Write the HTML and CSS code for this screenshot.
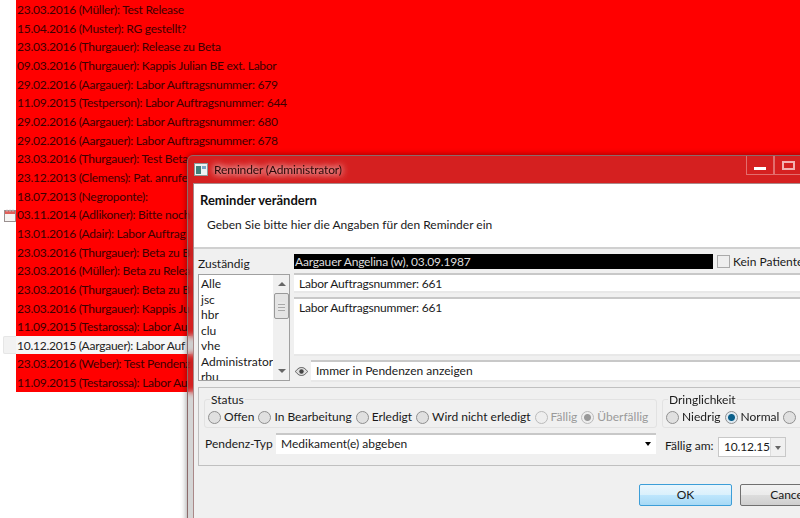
FILE: index.html
```html
<!DOCTYPE html>
<html>
<head>
  <meta charset="utf-8">
  <title>Reminder</title>
  <link rel="stylesheet" href="styles.css">
</head>
<body>

<div class="rows">
  <div class="row"><span class="gutter"></span><span class="txt">23.03.2016 (Müller): Test Release</span></div>
  <div class="row"><span class="gutter"></span><span class="txt">15.04.2016 (Muster): RG gestellt?</span></div>
  <div class="row"><span class="gutter"></span><span class="txt">23.03.2016 (Thurgauer): Release zu Beta</span></div>
  <div class="row"><span class="gutter"></span><span class="txt">09.03.2016 (Thurgauer): Kappis Julian BE ext. Labor</span></div>
  <div class="row"><span class="gutter"></span><span class="txt">29.02.2016 (Aargauer): Labor Auftragsnummer: 679</span></div>
  <div class="row"><span class="gutter"></span><span class="txt">11.09.2015 (Testperson): Labor Auftragsnummer: 644</span></div>
  <div class="row"><span class="gutter"></span><span class="txt">29.02.2016 (Aargauer): Labor Auftragsnummer: 680</span></div>
  <div class="row"><span class="gutter"></span><span class="txt">29.02.2016 (Aargauer): Labor Auftragsnummer: 678</span></div>
  <div class="row"><span class="gutter"></span><span class="txt">23.03.2016 (Thurgauer): Test Beta</span></div>
  <div class="row"><span class="gutter"></span><span class="txt">23.12.2013 (Clemens): Pat. anrufe</span></div>
  <div class="row"><span class="gutter"></span><span class="txt">18.07.2013 (Negroponte):</span></div>
  <div class="row"><span class="gutter">
    <svg class="cal" width="12" height="13" viewBox="0 0 12 13"><rect x=".5" y="1.500" width="11" height="11" fill="#f6f4f2" stroke="#9a9090"/><rect x="1" y="2" width="10" height="3" fill="#e0605a"/><path d="M3 .5V3M6 .5V3M9 .5V3" stroke="#c9b8b8"/></svg>
  </span><span class="txt">03.11.2014 (Adlikoner): Bitte noch</span></div>
  <div class="row"><span class="gutter"></span><span class="txt">13.01.2016 (Adair): Labor Auftrag</span></div>
  <div class="row"><span class="gutter"></span><span class="txt">23.03.2016 (Thurgauer): Beta zu B</span></div>
  <div class="row"><span class="gutter"></span><span class="txt">23.03.2016 (Müller): Beta zu Relea</span></div>
  <div class="row"><span class="gutter"></span><span class="txt">23.03.2016 (Thurgauer): Beta zu B</span></div>
  <div class="row"><span class="gutter"></span><span class="txt">23.03.2016 (Thurgauer): Kappis Ju</span></div>
  <div class="row"><span class="gutter"></span><span class="txt">11.09.2015 (Testarossa): Labor Au</span></div>
  <div class="row sel"><span class="gutter"></span><span class="txt">10.12.2015 (Aargauer): Labor Auf</span></div>
  <div class="row"><span class="gutter"></span><span class="txt">23.03.2016 (Weber): Test Pendenz</span></div>
  <div class="row"><span class="gutter"></span><span class="txt">11.09.2015 (Testarossa): Labor Au</span></div>
</div>

<div class="win">
  <div class="titlebar">
    <svg class="winicon" width="14" height="13" viewBox="0 0 14 13"><rect x=".5" y=".5" width="13" height="12" fill="#eef2f2" stroke="#8a9a9a"/><rect x="2" y="3" width="5" height="8" fill="#3f7f7a"/><rect x="8" y="3" width="4" height="3" fill="#7aa6c8"/></svg>
    <span class="wintitle">Reminder (Administrator)</span>
    <span class="winbtns">
      <span class="winbtn"><i class="min"></i></span>
      <span class="winbtn"><i class="max"></i></span>
    </span>
  </div>
  <div class="client">
    <div class="head">
      <div class="head-title">Reminder verändern</div>
      <div class="head-sub">Geben Sie bitte hier die Angaben für den Reminder ein</div>
    </div>
    <div class="form">
      <div class="top">
        <div class="left">
          <div class="lbl-z">Zuständig</div>
          <div class="listbox">
            <div class="items">
              <div>Alle</div><div>jsc</div><div>hbr</div><div>clu</div><div>vhe</div><div>Administrator</div><div>rbu</div>
            </div>
            <div class="sbar">
              <span class="arr up"></span>
              <span class="thumb"></span>
              <span class="arr down"></span>
            </div>
          </div>
        </div>
        <div class="right">
          <div class="patline">
            <div class="pat">Aargauer Angelina (w), 03.09.1987</div>
            <span class="cb"></span>
            <span class="nopat">Kein Patiente</span>
          </div>
          <div class="field f1">Labor Auftragsnummer: 661</div>
          <div class="field f2">Labor Auftragsnummer: 661</div>
          <div class="eyeline">
            <svg class="eye" width="13" height="9" viewBox="0 0 13 9"><path d="M.5 4.5C3 1 5 .5 6.500 .5S10 1 12.500 4.500C10 8 8 8.500 6.500 8.500S3 8 .5 4.500Z" fill="#ddd" stroke="#555"/><circle cx="6.500" cy="4.500" r="2.200" fill="#444"/></svg>
            <div class="field f3">Immer in Pendenzen anzeigen</div>
          </div>
        </div>
      </div>

      <div class="panel">
        <div class="groups">
          <div class="grp status">
            <span class="legend">Status</span>
            <label class="radio"><i></i>Offen</label>
            <label class="radio"><i></i>In Bearbeitung</label>
            <label class="radio"><i></i>Erledigt</label>
            <label class="radio"><i></i>Wird nicht erledigt</label>
            <label class="radio off"><i></i>Fällig</label>
            <label class="radio off on"><i></i>Überfällig</label>
          </div>
          <div class="grp dring">
            <span class="legend">Dringlichkeit</span>
            <label class="radio"><i></i>Niedrig</label>
            <label class="radio sel-r"><i></i>Normal</label>
            <label class="radio"><i></i></label>
          </div>
        </div>
        <div class="typline">
          <span class="typlbl">Pendenz-Typ</span>
          <div class="combo">Medikament(e) abgeben<span class="caret"></span></div>
          <span class="duelbl">Fällig am:</span>
          <div class="date"><span class="dateval">10.12.15</span><span class="datebtn"><span class="caret grey"></span></span></div>
        </div>
      </div>

      <div class="btns">
        <span class="btn ok">OK</span>
        <span class="btn">Cance</span>
      </div>
    </div>
  </div>
</div>

</body>
</html>
```

FILE: styles.css
```css
html,body{margin:0;padding:0;height:518px;overflow:hidden;background:#fff;}
body{font:12px Lato,"Open Sans",sans-serif;color:#1a1a1a;}

.rows{height:392px;}
.row{display:flex;height:18.67px;line-height:20px;}
.gutter{width:16px;flex:none;position:relative;}
.txt{flex:1;background:#f00;color:#3d0000;padding-left:1px;white-space:nowrap;letter-spacing:-.25px;}
.row.sel{margin-left:3px;background:#f2f2f2;border-radius:2px 0 0 2px;box-shadow:inset 0 0 0 1px #e6e6e6;}
.row.sel .gutter{width:13px;}
.row.sel .txt{background:#f6f6f6;color:#222;}
.cal{position:absolute;left:4px;top:3.5px;}

.win{position:absolute;left:187px;top:155px;width:660px;height:400px;border:1px solid #8c6a6a;border-radius:6px 6px 0 0;background:rgba(110,110,110,.29);backdrop-filter:blur(3px);box-shadow:0 0 6px rgba(0,0,0,.45);}
.titlebar{height:27px;display:flex;align-items:center;padding-left:6px;position:relative;}
.winicon{flex:none;margin-right:6px;}
.wintitle{color:#2a0a0a;letter-spacing:-.15px;text-shadow:0 0 6px #eee,0 0 8px #eee;}
.winbtns{position:absolute;left:558px;top:0;display:flex;}
.winbtn{width:26px;height:18px;border:1px solid rgba(255,255,255,.35);border-top:none;display:flex;align-items:center;justify-content:center;}
.winbtn .min{width:12px;height:3px;background:#fff;margin-top:6px;}
.winbtn .max{width:9px;height:5px;border:2px solid #f3b0b0;}

.client{margin-left:5px;height:372px;background:#f0f0f0;border:1px solid #a88;border-bottom:none;}
.head{height:63px;background:#fff;border-bottom:2px solid #d0d0d0;}
.head-title{font-weight:bold;padding:8px 0 0 6px;height:20px;font-size:13px;color:#111;}
.head-sub{padding:5px 0 0 13px;}

.form{padding:5px 0 0 4px;}
.top{display:flex;}
.left{width:92px;flex:none;}
.lbl-z{height:20px;line-height:20px;}
.listbox{display:flex;height:105px;border:1px solid #a0a0a0;background:#fff;overflow:hidden;}
.items{flex:1;padding:1px 0 0 2px;line-height:15.5px;}
.sbar{width:17px;flex:none;background:#f0f0f0;display:flex;flex-direction:column;align-items:center;position:relative;}
.thumb{width:15px;height:26px;margin-top:7px;border:1px solid #999;border-radius:2px;box-sizing:border-box;background:repeating-linear-gradient(#e8e8e8 0 2px,#a8a8a8 2px 3px) center/7px 9px no-repeat,#e4e4e4;}
.arr{width:0;height:0;border-left:4px solid transparent;border-right:4px solid transparent;margin-top:7px;}
.arr.up{border-bottom:4px solid #666;}
.arr.down{border-top:4px solid #666;position:absolute;bottom:7px;}

.right{margin-left:4px;flex:1;}
.patline{display:flex;align-items:flex-start;height:16px;}
.pat{width:418px;padding-left:1px;height:15px;line-height:15px;background:#000;color:#ddd;flex:none;letter-spacing:-.18px;}
.cb{width:11px;height:11px;border:1px solid #aaa;background:#eee;margin:1px 3px 0 4px;flex:none;}
.nopat{white-space:nowrap;line-height:15px;}
.field{background:#fff;border-top:2px solid #c8c8c8;border-bottom:2px solid #e8e8e8;padding-left:5px;box-sizing:border-box;}
.f1{height:20px;line-height:17px;margin-top:3px;letter-spacing:-.2px;}
.f2{height:59px;line-height:17px;margin-top:4px;letter-spacing:-.2px;}
.eyeline{display:flex;align-items:center;margin-top:4px;}
.eye{flex:none;margin:0 3px 0 1px;}
.f3{flex:1;height:22px;line-height:18px;}

.panel{margin-top:5px;height:79px;border:1px solid #c0c0c0;box-sizing:border-box;padding:11px 0 0 5px;}
.groups{display:flex;gap:5px;}
.grp{position:relative;height:29px;border:1px solid #e2e2e2;border-radius:3px;display:flex;align-items:flex-end;padding:0 0 3px 3px;box-sizing:border-box;white-space:nowrap;flex:none;}
.status{width:453px;}
.dring{width:200px;}
.legend{position:absolute;left:5px;top:-7px;background:#f0f0f0;padding:0 1px;line-height:14px;}
.radio{display:inline-flex;align-items:center;margin-right:4px;line-height:14px;}
.radio i{width:11px;height:11px;border:1px solid #8f8f8f;border-radius:50%;background:#e0e0e0;margin-right:3px;display:block;}
.radio.off{color:#9a9a9a;}
.radio.off i{border-color:#bbb;background:#eee;}
.radio.on i{background:radial-gradient(circle,#999 3px,#eee 4px);}
.radio.sel-r i{background:radial-gradient(circle,#0a5f8a 3px,#dfeaf2 4px);}
.typline{display:flex;align-items:flex-start;margin-top:5px;}
.typlbl{width:71px;padding-left:1px;flex:none;white-space:nowrap;line-height:21px;}
.combo{width:380px;height:21px;line-height:18px;background:#fff;border-top:2px solid #c8c8c8;box-sizing:border-box;padding-left:5px;flex:none;position:relative;}
.caret{position:absolute;right:5px;top:7px;width:0;height:0;border-left:3px solid transparent;border-right:3px solid transparent;border-top:4px solid #000;}
.caret.grey{border-top-color:#666;right:4px;top:8px;}
.duelbl{margin-left:9px;margin-top:5px;width:53px;flex:none;white-space:nowrap;}
.date{display:flex;margin-top:4px;width:68px;height:20px;border:1px solid #c8c8c8;box-sizing:border-box;background:#fff;line-height:18px;flex:none;}
.dateval{flex:1;padding-left:5px;letter-spacing:-.2px;}
.datebtn{width:20px;background:#f0f0f0;border-left:1px solid #ddd;position:relative;}

.btns{display:flex;gap:8px;padding:18px 0 0 441px;}
.btn{width:93px;height:22px;box-sizing:border-box;line-height:19px;text-align:center;border:1px solid #707070;border-radius:2px;background:linear-gradient(#f2f2f2,#ebebeb 50%,#ddd 50%,#cfcfcf);flex:none;}
.btn.ok{border:1px solid #3c9ed8;background:linear-gradient(#eaf6fd,#d9f0fc 50%,#bee6fd 50%,#a7d9f5);}
```
